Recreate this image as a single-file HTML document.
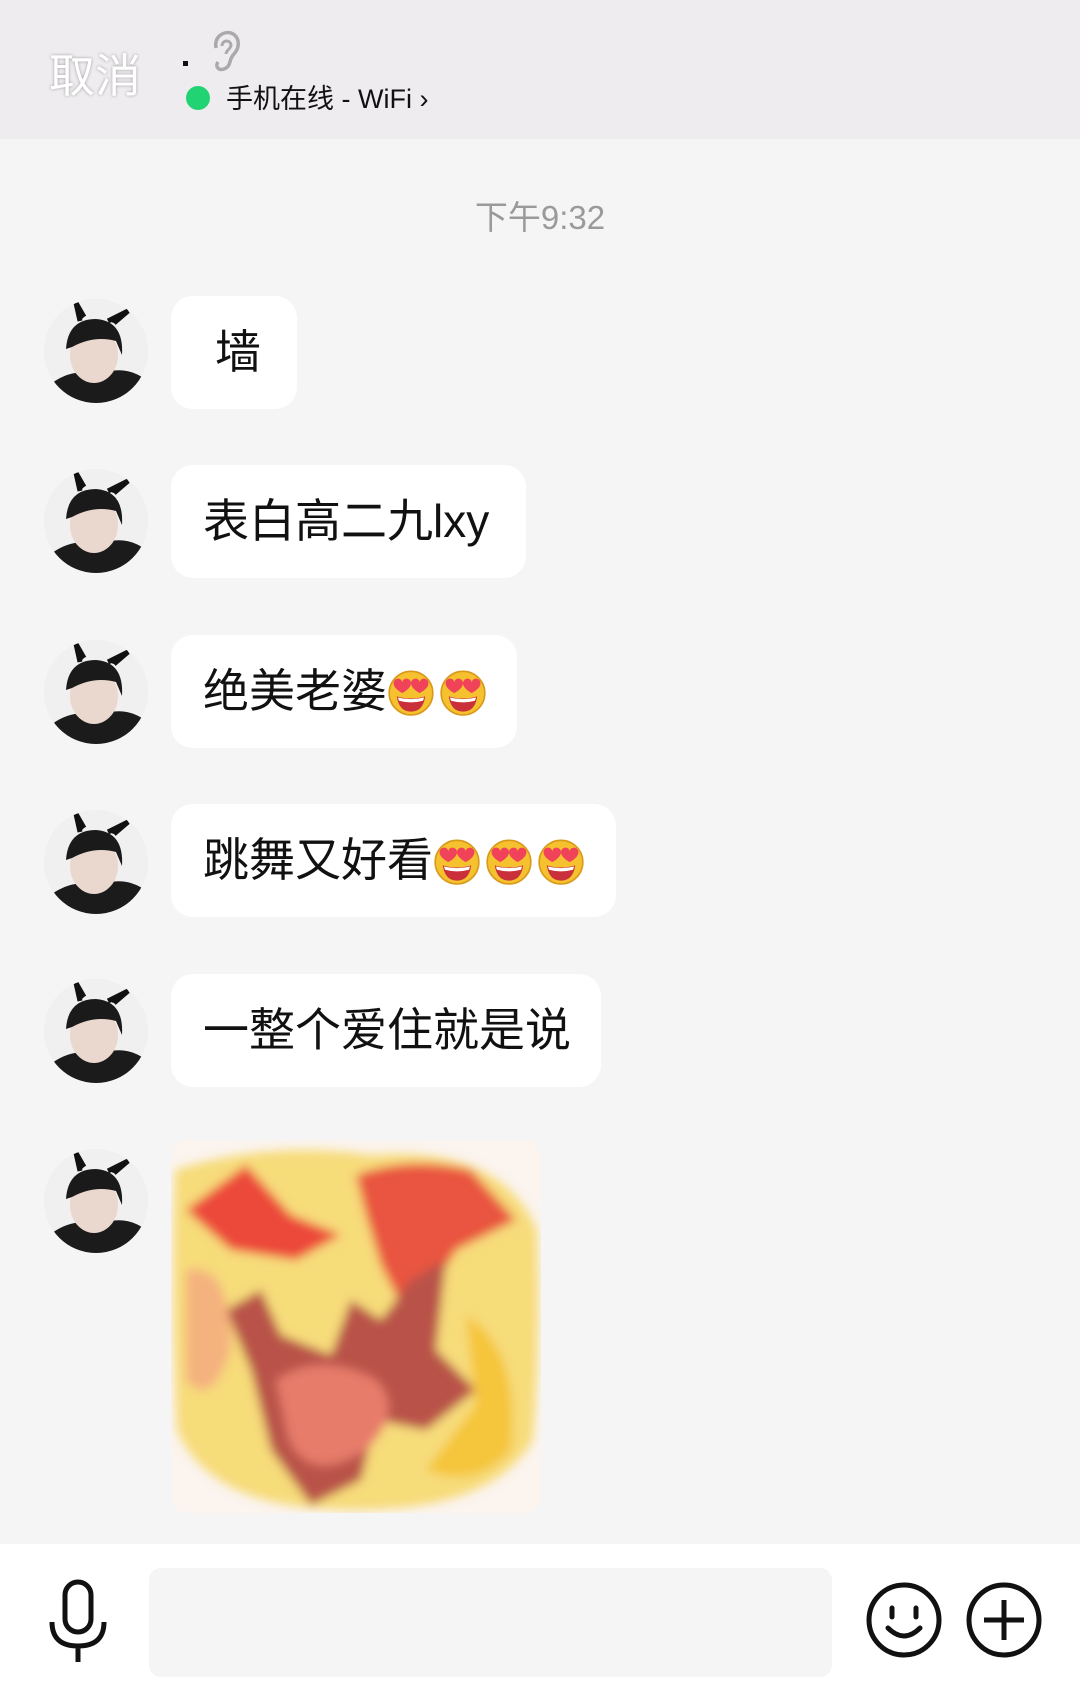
<!DOCTYPE html>
<html><head><meta charset="utf-8"><style>
*{margin:0;padding:0;box-sizing:border-box}
body{width:1080px;height:1704px;background:#f6f5f6;position:relative;overflow:hidden;font-family:"Liberation Sans","Noto Sans CJK SC",sans-serif}
.hdr{position:absolute;left:0;top:0;width:1080px;height:139px;background:#efecef}
.cancel{position:absolute;left:49px;top:40px;font-size:46px;color:#fff;text-shadow:0 0 3px rgba(0,0,0,.35)}
.status{position:absolute;left:226px;top:77px;font-size:27px;color:#111}
.gdot{position:absolute;left:186px;top:86px;width:24px;height:24px;border-radius:50%;background:#22d374}
.time{position:absolute;left:0;width:1080px;top:191px;text-align:center;font-size:33px;color:#9a9a9a}
.av{position:absolute;left:44px;width:104px;height:104px;border-radius:50%;overflow:hidden;background:#ededed}
.b{position:absolute;left:171px;height:113px;background:#fff;border-radius:22px;font-size:46px;color:#111;line-height:113px;padding-left:32px;white-space:nowrap}
.b svg{vertical-align:-9px;margin-right:4px}
.bar{position:absolute;left:0;top:1544px;width:1080px;height:160px;background:#fff}
.inp{position:absolute;left:149px;top:1568px;width:683px;height:109px;background:#f6f5f6;border-radius:12px}
</style></head><body>
<div class="hdr"></div>
<div class="cancel">取消</div>
<div style="position:absolute;left:183px;top:61px;width:5px;height:5px;background:#111"></div>
<svg style="position:absolute;left:208px;top:28px" width="36" height="46" viewBox="0 0 36 46"><path d="M8 20 C6 8 16 3 23 5 C31 8 33 18 26 26 C20 32 24 38 16 41 C10 43 7 38 10 34" fill="none" stroke="#aaa" stroke-width="3.5"/><path d="M14 18 C14 12 22 11 23 17 C23 21 18 22 18 26" fill="none" stroke="#aaa" stroke-width="3"/></svg>
<div class="gdot"></div>
<div class="status">手机在线 - WiFi ›</div>
<div class="time">下午9:32</div>

<div class="av" style="top:299px"><svg width="104" height="104" viewBox="0 0 104 104"><rect width="104" height="104" fill="#f0f0f0"/><path d="M0 104 L8 84 Q30 68 55 76 Q80 64 104 82 L104 104Z" fill="#1b1b1b"/><ellipse cx="50" cy="56" rx="24" ry="28" fill="#ead8ce"/><path d="M22 50 Q24 20 52 20 Q80 22 78 56 L72 42 Q50 36 28 48Z" fill="#1a1a1a"/><path d="M36 22 L32 4 L40 18 M64 22 L84 12 L70 24" stroke="#111" stroke-width="5"/></svg></div>
<div class="av" style="top:469px"><svg width="104" height="104" viewBox="0 0 104 104"><rect width="104" height="104" fill="#f0f0f0"/><path d="M0 104 L8 84 Q30 68 55 76 Q80 64 104 82 L104 104Z" fill="#1b1b1b"/><ellipse cx="50" cy="56" rx="24" ry="28" fill="#ead8ce"/><path d="M22 50 Q24 20 52 20 Q80 22 78 56 L72 42 Q50 36 28 48Z" fill="#1a1a1a"/><path d="M36 22 L32 4 L40 18 M64 22 L84 12 L70 24" stroke="#111" stroke-width="5"/></svg></div>
<div class="av" style="top:640px"><svg width="104" height="104" viewBox="0 0 104 104"><rect width="104" height="104" fill="#f0f0f0"/><path d="M0 104 L8 84 Q30 68 55 76 Q80 64 104 82 L104 104Z" fill="#1b1b1b"/><ellipse cx="50" cy="56" rx="24" ry="28" fill="#ead8ce"/><path d="M22 50 Q24 20 52 20 Q80 22 78 56 L72 42 Q50 36 28 48Z" fill="#1a1a1a"/><path d="M36 22 L32 4 L40 18 M64 22 L84 12 L70 24" stroke="#111" stroke-width="5"/></svg></div>
<div class="av" style="top:810px"><svg width="104" height="104" viewBox="0 0 104 104"><rect width="104" height="104" fill="#f0f0f0"/><path d="M0 104 L8 84 Q30 68 55 76 Q80 64 104 82 L104 104Z" fill="#1b1b1b"/><ellipse cx="50" cy="56" rx="24" ry="28" fill="#ead8ce"/><path d="M22 50 Q24 20 52 20 Q80 22 78 56 L72 42 Q50 36 28 48Z" fill="#1a1a1a"/><path d="M36 22 L32 4 L40 18 M64 22 L84 12 L70 24" stroke="#111" stroke-width="5"/></svg></div>
<div class="av" style="top:979px"><svg width="104" height="104" viewBox="0 0 104 104"><rect width="104" height="104" fill="#f0f0f0"/><path d="M0 104 L8 84 Q30 68 55 76 Q80 64 104 82 L104 104Z" fill="#1b1b1b"/><ellipse cx="50" cy="56" rx="24" ry="28" fill="#ead8ce"/><path d="M22 50 Q24 20 52 20 Q80 22 78 56 L72 42 Q50 36 28 48Z" fill="#1a1a1a"/><path d="M36 22 L32 4 L40 18 M64 22 L84 12 L70 24" stroke="#111" stroke-width="5"/></svg></div>
<div class="av" style="top:1149px"><svg width="104" height="104" viewBox="0 0 104 104"><rect width="104" height="104" fill="#f0f0f0"/><path d="M0 104 L8 84 Q30 68 55 76 Q80 64 104 82 L104 104Z" fill="#1b1b1b"/><ellipse cx="50" cy="56" rx="24" ry="28" fill="#ead8ce"/><path d="M22 50 Q24 20 52 20 Q80 22 78 56 L72 42 Q50 36 28 48Z" fill="#1a1a1a"/><path d="M36 22 L32 4 L40 18 M64 22 L84 12 L70 24" stroke="#111" stroke-width="5"/></svg></div>

<div class="b" style="top:296px;width:126px;padding-left:44px">墙</div>
<div class="b" style="top:465px;width:355px">表白高二九lxy</div>
<div class="b" style="top:635px;width:346px">绝美老婆<svg width="48" height="48" viewBox="0 0 44 44"><circle cx="22" cy="23" r="20" fill="#f6c12e" stroke="#d99a1c" stroke-width="1.5"/><path d="M7 14c0-5 7-6 8-1 1-5 8-4 8 1 0 5-8 9-8 9s-8-4-8-9z" fill="#f0435a" transform="translate(-1,0)"/><path d="M22 14c0-5 7-6 8-1 1-5 8-4 8 1 0 5-8 9-8 9s-8-4-8-9z" fill="#f0435a"/><path d="M9 26 Q22 30 35 26 Q33 40 22 40 Q11 40 9 26z" fill="#c9303a"/><path d="M10 27 Q22 30 34 27 L33 30 Q22 33 11 30z" fill="#fff"/></svg><svg width="48" height="48" viewBox="0 0 44 44"><circle cx="22" cy="23" r="20" fill="#f6c12e" stroke="#d99a1c" stroke-width="1.5"/><path d="M7 14c0-5 7-6 8-1 1-5 8-4 8 1 0 5-8 9-8 9s-8-4-8-9z" fill="#f0435a" transform="translate(-1,0)"/><path d="M22 14c0-5 7-6 8-1 1-5 8-4 8 1 0 5-8 9-8 9s-8-4-8-9z" fill="#f0435a"/><path d="M9 26 Q22 30 35 26 Q33 40 22 40 Q11 40 9 26z" fill="#c9303a"/><path d="M10 27 Q22 30 34 27 L33 30 Q22 33 11 30z" fill="#fff"/></svg></div>
<div class="b" style="top:804px;width:445px">跳舞又好看<svg width="48" height="48" viewBox="0 0 44 44"><circle cx="22" cy="23" r="20" fill="#f6c12e" stroke="#d99a1c" stroke-width="1.5"/><path d="M7 14c0-5 7-6 8-1 1-5 8-4 8 1 0 5-8 9-8 9s-8-4-8-9z" fill="#f0435a" transform="translate(-1,0)"/><path d="M22 14c0-5 7-6 8-1 1-5 8-4 8 1 0 5-8 9-8 9s-8-4-8-9z" fill="#f0435a"/><path d="M9 26 Q22 30 35 26 Q33 40 22 40 Q11 40 9 26z" fill="#c9303a"/><path d="M10 27 Q22 30 34 27 L33 30 Q22 33 11 30z" fill="#fff"/></svg><svg width="48" height="48" viewBox="0 0 44 44"><circle cx="22" cy="23" r="20" fill="#f6c12e" stroke="#d99a1c" stroke-width="1.5"/><path d="M7 14c0-5 7-6 8-1 1-5 8-4 8 1 0 5-8 9-8 9s-8-4-8-9z" fill="#f0435a" transform="translate(-1,0)"/><path d="M22 14c0-5 7-6 8-1 1-5 8-4 8 1 0 5-8 9-8 9s-8-4-8-9z" fill="#f0435a"/><path d="M9 26 Q22 30 35 26 Q33 40 22 40 Q11 40 9 26z" fill="#c9303a"/><path d="M10 27 Q22 30 34 27 L33 30 Q22 33 11 30z" fill="#fff"/></svg><svg width="48" height="48" viewBox="0 0 44 44"><circle cx="22" cy="23" r="20" fill="#f6c12e" stroke="#d99a1c" stroke-width="1.5"/><path d="M7 14c0-5 7-6 8-1 1-5 8-4 8 1 0 5-8 9-8 9s-8-4-8-9z" fill="#f0435a" transform="translate(-1,0)"/><path d="M22 14c0-5 7-6 8-1 1-5 8-4 8 1 0 5-8 9-8 9s-8-4-8-9z" fill="#f0435a"/><path d="M9 26 Q22 30 35 26 Q33 40 22 40 Q11 40 9 26z" fill="#c9303a"/><path d="M10 27 Q22 30 34 27 L33 30 Q22 33 11 30z" fill="#fff"/></svg></div>
<div class="b" style="top:974px;width:430px">一整个爱住就是说</div>

<svg style="position:absolute;left:171px;top:1140px" width="370" height="373" viewBox="0 0 370 373">
<defs><filter id="bl"><feGaussianBlur stdDeviation="5"/></filter><clipPath id="cp"><rect width="370" height="373" rx="16"/></clipPath></defs>
<g clip-path="url(#cp)"><rect width="370" height="373" fill="#fbf4ef"/>
<g filter="url(#bl)">
<path d="M4 30 Q100 0 200 15 Q330 5 366 90 Q370 200 362 300 Q320 372 180 370 Q40 370 6 290 Q0 160 4 30Z" fill="#f7dc7a"/>
<path d="M15 70 L75 25 L120 75 L170 95 L125 120 L60 110 Z" fill="#ec4a3a"/>
<path d="M185 35 Q240 15 300 30 L345 80 L285 110 L240 185 L210 125 L195 75Z" fill="#e9553f"/>
<path d="M55 170 L90 150 L110 195 L160 215 L180 160 L210 180 L240 140 L275 120 L265 210 L305 250 L255 290 L205 280 L190 340 L140 365 L100 310 L80 230Z" fill="#b9524a"/>
<path d="M105 240 Q150 210 205 240 Q235 270 195 310 Q140 345 118 300Z" fill="#e77b6a"/>
<path d="M295 175 Q350 210 340 310 Q305 350 255 330 L305 265Z" fill="#f5c53a"/>
<path d="M15 130 Q60 120 60 210 Q40 270 15 240Z" fill="#f4b27e"/>
</g></g></svg>

<div class="bar"></div>
<div class="inp"></div>
<svg style="position:absolute;left:46px;top:1578px" width="64" height="86" viewBox="0 0 64 86"><rect x="19" y="4" width="26" height="50" rx="13" fill="none" stroke="#111" stroke-width="5"/><path d="M6 44 Q6 68 32 68 Q58 68 58 44 M32 68 V84" fill="none" stroke="#111" stroke-width="5"/></svg>
<svg style="position:absolute;left:864px;top:1580px" width="80" height="80" viewBox="0 0 80 80"><circle cx="40" cy="40" r="35" fill="none" stroke="#111" stroke-width="5"/><path d="M28 28 V37 M52 28 V37" stroke="#111" stroke-width="5" stroke-linecap="round"/><path d="M24 48 Q40 64 56 48" fill="none" stroke="#111" stroke-width="5" stroke-linecap="round"/></svg>
<svg style="position:absolute;left:964px;top:1580px" width="80" height="80" viewBox="0 0 80 80"><circle cx="40" cy="40" r="35" fill="none" stroke="#111" stroke-width="5"/><path d="M40 20 V60 M20 40 H60" stroke="#111" stroke-width="5"/></svg>
</body></html>
